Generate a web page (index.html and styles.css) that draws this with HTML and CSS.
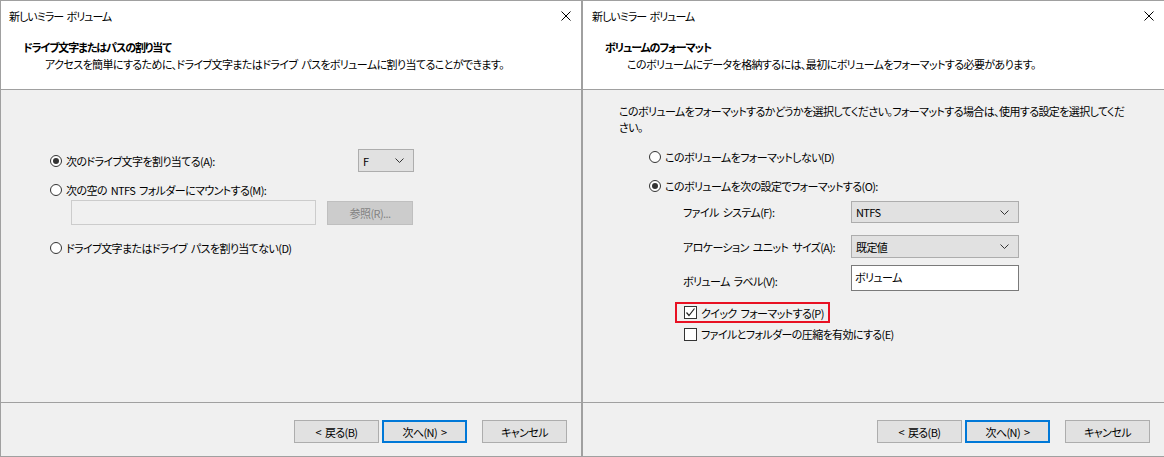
FILE: index.html
```html
<!DOCTYPE html>
<html lang="ja">

<head>
    <title>新しいミラー ボリューム</title>
    <link rel="stylesheet" href="styles.css">
</head>

<body>
    <div class="screen">
        <div class="dialog dialog-left">
            <div class="header">
                <div class="title-row">
                    <span>新しいミラー ボリューム</span>
                    <svg class="close-icon" width="10" height="10" viewBox="0 0 10 10">
                        <path d="M0.5 0.5 L9.5 9.5 M9.5 0.5 L0.5 9.5" stroke="#000" stroke-width="1" fill="none" />
                    </svg>
                </div>
                <div class="heading">ドライブ文字またはパスの割り当て</div>
                <div class="subtitle">アクセスを簡単にするために、ドライブ文字またはドライブ パスをボリュームに割り当てることができます。</div>
            </div>

            <div class="body body-left">
                <div class="assign-row">
                    <label class="radio-line">
                        <span class="radio checked"></span>
                        <span>次のドライブ文字を割り当てる(A):</span>
                    </label>
                    <div class="select select-small">
                        <span>F</span>
                        <svg class="chevron" width="9" height="5" viewBox="0 0 9 5">
                            <path d="M0.5 0.5 L4.5 4.5 L8.5 0.5" stroke="#333" stroke-width="1" fill="none" />
                        </svg>
                    </div>
                </div>

                <label class="radio-line mount-line">
                    <span class="radio"></span>
                    <span>次の空の NTFS フォルダーにマウントする(M):</span>
                </label>

                <div class="mount-row">
                    <div class="path-box"></div>
                    <div class="btn btn-disabled">参照(R)...</div>
                </div>

                <label class="radio-line none-line">
                    <span class="radio"></span>
                    <span>ドライブ文字またはドライブ パスを割り当てない(D)</span>
                </label>
            </div>

            <div class="footer">
                <div class="btn">&lt; 戻る(B)</div>
                <div class="btn btn-default">次へ(N) &gt;</div>
                <div class="btn btn-cancel">キャンセル</div>
            </div>
        </div>

        <div class="dialog dialog-right">
            <div class="header">
                <div class="title-row">
                    <span>新しいミラー ボリューム</span>
                    <svg class="close-icon" width="10" height="10" viewBox="0 0 10 10">
                        <path d="M0.5 0.5 L9.5 9.5 M9.5 0.5 L0.5 9.5" stroke="#000" stroke-width="1" fill="none" />
                    </svg>
                </div>
                <div class="heading">ボリュームのフォーマット</div>
                <div class="subtitle">このボリュームにデータを格納するには、最初にボリュームをフォーマットする必要があります。</div>
            </div>

            <div class="body body-right">
                <p class="intro">このボリュームをフォーマットするかどうかを選択してください。フォーマットする場合は、使用する設定を選択してくだ<br>さい。</p>

                <label class="radio-line no-format">
                    <span class="radio"></span>
                    <span>このボリュームをフォーマットしない(D)</span>
                </label>

                <label class="radio-line do-format">
                    <span class="radio checked"></span>
                    <span>このボリュームを次の設定でフォーマットする(O):</span>
                </label>

                <div class="format-grid">
                    <span class="field-label">ファイル システム(F):</span>
                    <div class="select">
                        <span>NTFS</span>
                        <svg class="chevron" width="9" height="5" viewBox="0 0 9 5">
                            <path d="M0.5 0.5 L4.5 4.5 L8.5 0.5" stroke="#333" stroke-width="1" fill="none" />
                        </svg>
                    </div>

                    <span class="field-label">アロケーション ユニット サイズ(A):</span>
                    <div class="select select-tall">
                        <span>既定値</span>
                        <svg class="chevron" width="9" height="5" viewBox="0 0 9 5">
                            <path d="M0.5 0.5 L4.5 4.5 L8.5 0.5" stroke="#333" stroke-width="1" fill="none" />
                        </svg>
                    </div>

                    <span class="field-label">ボリューム ラベル(V):</span>
                    <div class="text-input">ボリューム</div>
                </div>

                <div class="checks">
                    <label class="check-line highlight">
                        <span class="checkbox">
                            <svg width="11" height="11" viewBox="0 0 11 11">
                                <path d="M1.5 5.5 L4 8.5 L9.5 1.5" stroke="#222" stroke-width="1.2" fill="none" />
                            </svg>
                        </span>
                        <span>クイック フォーマットする(P)</span>
                    </label>
                    <label class="check-line">
                        <span class="checkbox"></span>
                        <span>ファイルとフォルダーの圧縮を有効にする(E)</span>
                    </label>
                </div>
            </div>

            <div class="footer">
                <div class="btn">&lt; 戻る(B)</div>
                <div class="btn btn-default">次へ(N) &gt;</div>
                <div class="btn btn-cancel">キャンセル</div>
            </div>
        </div>
    </div>
</body>

</html>
```

FILE: styles.css
```css
body {
    margin: 0;
    font-family: "Noto Sans CJK JP", "Noto Sans", sans-serif;
    font-size: 11px;
    letter-spacing: -0.6px;
    word-spacing: 2px;
    font-feature-settings: "palt";
    color: #000;
    background: #fff;
}

.screen {
    display: flex;
    width: 1164px;
    height: 457px;
    white-space: nowrap;
}

.dialog {
    box-sizing: border-box;
    height: 457px;
    display: flex;
    flex-direction: column;
    background: #f0f0f0;
    border-top: 1px solid #a0a0a0;
    border-bottom: 1px solid #a0a0a0;
}

.dialog-left {
    width: 583px;
    border-left: 1px solid #a0a0a0;
    border-right: 2px solid #a0a0a0;
}

.dialog-right {
    width: 581px;
}

/* header */

.header {
    height: 88px;
    background: #fff;
    border-bottom: 1px solid #a0a0a0;
}

.title-row {
    display: flex;
    justify-content: space-between;
    align-items: center;
    height: 16px;
    line-height: 16px;
    margin-top: 7px;
    padding: 0 10px 0 8px;
    letter-spacing: -1px;
}

.dialog-right .title-row {
    padding-left: 9px;
}

.heading {
    font-weight: bold;
    line-height: 16px;
    margin-top: 15px;
    padding-left: 22px;
    letter-spacing: -1.1px;
}

.subtitle {
    line-height: 18px;
    padding-left: 44px;
}

/* body */

.body {
    flex: 1;
}

.body-left {
    padding: 59px 0 0 49px;
}

.radio-line {
    display: flex;
    align-items: center;
    gap: 4px;
    line-height: 16px;
}

.radio {
    box-sizing: border-box;
    width: 12px;
    height: 12px;
    border: 1px solid #333;
    border-radius: 50%;
    background: #fff;
    display: flex;
    align-items: center;
    justify-content: center;
}

.radio.checked::after {
    content: "";
    width: 6px;
    height: 6px;
    border-radius: 50%;
    background: #333;
}

.assign-row {
    width: 364px;
    display: flex;
    justify-content: space-between;
    align-items: center;
}

.select {
    box-sizing: border-box;
    height: 22px;
    background: #e1e1e1;
    border: 1px solid #adadad;
    display: flex;
    justify-content: space-between;
    align-items: center;
    padding: 0 9px 0 4px;
}

.select-small {
    width: 56px;
    height: 23px;
}

.select-tall {
    height: 23px;
}

.mount-line {
    margin-top: 10px;
}

.mount-row {
    display: flex;
    align-items: center;
    gap: 11px;
    margin: 2px 0 0 21px;
}

.path-box {
    box-sizing: border-box;
    width: 245px;
    height: 25px;
    border: 1px solid #cccccc;
    background: #f0f0f0;
}

.none-line {
    margin-top: 15px;
}

.body-right {
    padding-left: 36px;
}

.intro {
    margin: 13px 0 0;
    line-height: 16px;
}

.no-format {
    margin: 14px 0 0 30px;
}

.do-format {
    margin: 13px 0 0 30px;
}

.format-grid {
    display: grid;
    grid-template-columns: 168px 168px;
    row-gap: 12px;
    align-items: center;
    margin: 7px 0 0 64px;
}

.format-grid .text-input {
    margin-top: -5px;
}

.text-input {
    box-sizing: border-box;
    height: 26px;
    border: 1px solid #7a7a7a;
    background: #fff;
    padding: 0 3px;
    line-height: 22px;
}

.checks {
    margin: 11px 0 0 65px;
    display: flex;
    flex-direction: column;
    align-items: flex-start;
    gap: 3px;
}

.check-line {
    display: flex;
    align-items: center;
    gap: 4px;
    line-height: 16px;
}

.checkbox {
    box-sizing: border-box;
    width: 13px;
    height: 13px;
    border: 1px solid #333;
    background: #fff;
    display: flex;
    align-items: center;
    justify-content: center;
}

.highlight {
    border: 2px solid #e81123;
    margin-left: -9px;
    padding: 0 4px 0 7px;
    height: 17px;
}

/* footer */

.footer {
    box-sizing: border-box;
    height: 54px;
    border-top: 1px solid #a0a0a0;
    display: flex;
    justify-content: flex-end;
    align-items: flex-start;
    padding: 17px 14px 0 0;
}

.btn {
    box-sizing: border-box;
    width: 85px;
    height: 23px;
    background: #e1e1e1;
    border: 1px solid #adadad;
    display: flex;
    align-items: center;
    justify-content: center;
}

.btn-default {
    border: 2px solid #0078d7;
    margin-left: 3px;
}

.btn-cancel {
    margin-left: 15px;
}

.btn-disabled {
    width: 86px;
    height: 24px;
    background: #cccccc;
    border-color: #bfbfbf;
    color: #838383;
}
```
